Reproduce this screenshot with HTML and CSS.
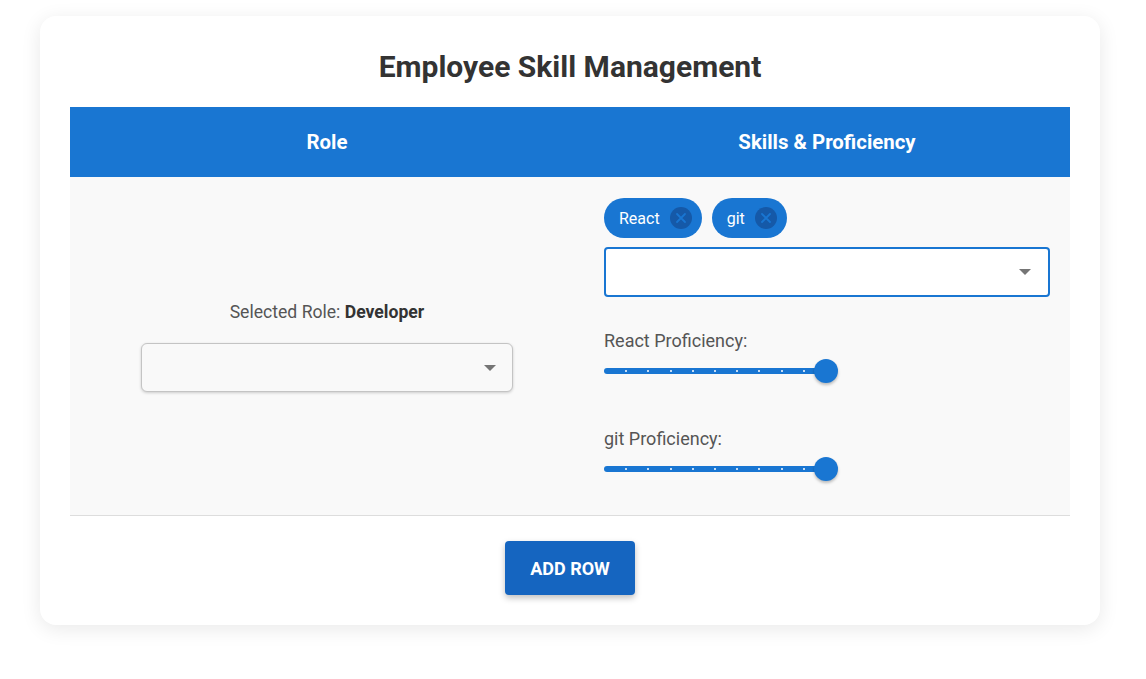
FILE: index.html
```html
<!DOCTYPE html>
<html lang="en">
<head>
<meta charset="utf-8">
<title>Employee Skill Management</title>
<link rel="stylesheet" href="styles.css">
</head>
<body>
<div class="card">
  <h1 class="title">Employee Skill Management</h1>
  <table class="grid">
    <thead>
      <tr>
        <th class="col-role">Role</th>
        <th class="col-skills">Skills &amp; Proficiency</th>
      </tr>
    </thead>
    <tbody>
      <tr>
        <td class="cell-role">
          <p class="selected">Selected Role: <strong>Developer</strong></p>
          <div class="select select-role"><span class="arrow"></span></div>
        </td>
        <td class="cell-skills">
          <div class="chips">
            <span class="chip">React<span class="chip-x"><svg viewBox="0 0 22 22" width="22" height="22"><circle cx="11" cy="11" r="11" fill="#1559a8"/><path d="M7 7 L15 15 M15 7 L7 15" stroke="#1976d2" stroke-width="1.8" stroke-linecap="round"/></svg></span></span>
            <span class="chip">git<span class="chip-x"><svg viewBox="0 0 22 22" width="22" height="22"><circle cx="11" cy="11" r="11" fill="#1559a8"/><path d="M7 7 L15 15 M15 7 L7 15" stroke="#1976d2" stroke-width="1.8" stroke-linecap="round"/></svg></span></span>
          </div>
          <div class="select select-skills"><span class="arrow"></span></div>
          <div class="skills-list">
            <div class="skill">
              <div class="skill-label">React Proficiency:</div>
              <div class="slider">
                <div class="track">
                  <span class="dot" style="left:10%"></span><span class="dot" style="left:20%"></span><span class="dot" style="left:30%"></span><span class="dot" style="left:40%"></span><span class="dot" style="left:50%"></span><span class="dot" style="left:60%"></span><span class="dot" style="left:70%"></span><span class="dot" style="left:80%"></span><span class="dot" style="left:90%"></span>
                  <span class="thumb" style="left:100%"></span>
                </div>
              </div>
            </div>
            <div class="skill">
              <div class="skill-label">git Proficiency:</div>
              <div class="slider">
                <div class="track">
                  <span class="dot" style="left:10%"></span><span class="dot" style="left:20%"></span><span class="dot" style="left:30%"></span><span class="dot" style="left:40%"></span><span class="dot" style="left:50%"></span><span class="dot" style="left:60%"></span><span class="dot" style="left:70%"></span><span class="dot" style="left:80%"></span><span class="dot" style="left:90%"></span>
                  <span class="thumb" style="left:100%"></span>
                </div>
              </div>
            </div>
          </div>
        </td>
      </tr>
    </tbody>
  </table>
  <div class="actions">
    <button class="btn">ADD ROW</button>
  </div>
</div>
</body>
</html>
```
FILE: styles.css
```css
* { box-sizing: border-box; }
html, body { background: #ffffff; }
body {
  margin: 0;
  padding: 16px 46px 40px 40px;
  font-family: Roboto, "Liberation Sans", sans-serif;
  color: #333;
}
.card {
  background: #fff;
  border-radius: 16px;
  padding: 30px;
  box-shadow: 0 4px 20px rgba(0,0,0,0.09);
}
.title {
  margin: 0 0 24px;
  padding-top: 4px;
  font-size: 30px;
  line-height: 33px;
  font-weight: 700;
  text-align: center;
  color: #333;
}
.grid {
  width: 100%;
  border-collapse: collapse;
}
.grid th {
  background: #1976d2;
  color: #fff;
  font-size: 20.4px;
  font-weight: 700;
  height: 70px;
  padding: 0 20px;
  text-align: center;
}
.col-role { width: 514px; }
.grid td {
  background: #f9f9f9;
  border-bottom: 1px solid #ddd;
  vertical-align: middle;
}
.cell-role {
  text-align: center;
  padding: 0 20px;
}
.selected {
  margin: 0 0 19px;
  font-size: 17.6px;
  line-height: 24px;
  color: #555;
}
.selected strong { color: #333; font-weight: 700; }
.select {
  position: relative;
  border-radius: 4px;
  background: #fff;
}
.select-role {
  width: 372px;
  height: 49px;
  margin: 0 auto;
  border: 1px solid #c4c4c4;
  border-radius: 6px;
  background: #f9f9f9;
  box-shadow: 0 1px 3px rgba(0,0,0,0.18);
}
.select-skills {
  height: 50px;
  border: 2px solid #1976d2;
}
.arrow {
  position: absolute;
  top: 50%;
  margin-top: -3px;
  width: 0; height: 0;
  border-left: 6px solid transparent;
  border-right: 6px solid transparent;
  border-top: 6px solid #757575;
}
.select-role .arrow { right: 16px; }
.select-skills .arrow { right: 17px; }
.cell-skills {
  padding: 21px 20px 28px;
  text-align: left;
}
.chips {
  display: flex;
  gap: 10px;
  margin-bottom: 9px;
}
.chip {
  display: inline-flex;
  align-items: center;
  height: 40px;
  padding: 0 10px 0 15px;
  border-radius: 20px;
  background: #1976d2;
  color: #fff;
  font-size: 16px;
  gap: 10px;
}
.chip-x { display: flex; }
.skills-list {
  margin-top: 32px;
  display: flex;
  flex-direction: column;
  gap: 38px;
}
.skill-label {
  font-size: 18px;
  line-height: 24px;
  color: #555;
}
.slider {
  width: 222px;
  height: 36px;
  display: flex;
  align-items: center;
}
.track {
  position: relative;
  width: 100%;
  height: 6px;
  border-radius: 3px;
  background: #1976d2;
}
.dot {
  position: absolute;
  top: 2px;
  width: 2px;
  height: 2px;
  margin-left: -1px;
  background: #fff;
  border-radius: 1px;
}
.thumb {
  position: absolute;
  top: 50%;
  width: 24px;
  height: 24px;
  margin: -12px 0 0 -12px;
  border-radius: 50%;
  background: #1976d2;
  box-shadow: 0 2px 3px rgba(0,0,0,0.25);
}
.actions {
  display: flex;
  justify-content: center;
  padding-top: 25px;
}
.btn {
  width: 130px;
  height: 54px;
  border: none;
  border-radius: 4px;
  background: #1565c0;
  color: #fff;
  font-family: Roboto, "Liberation Sans", sans-serif;
  font-size: 18px;
  font-weight: 700;
  box-shadow: 0 3px 6px rgba(0,0,0,0.25);
}
```
